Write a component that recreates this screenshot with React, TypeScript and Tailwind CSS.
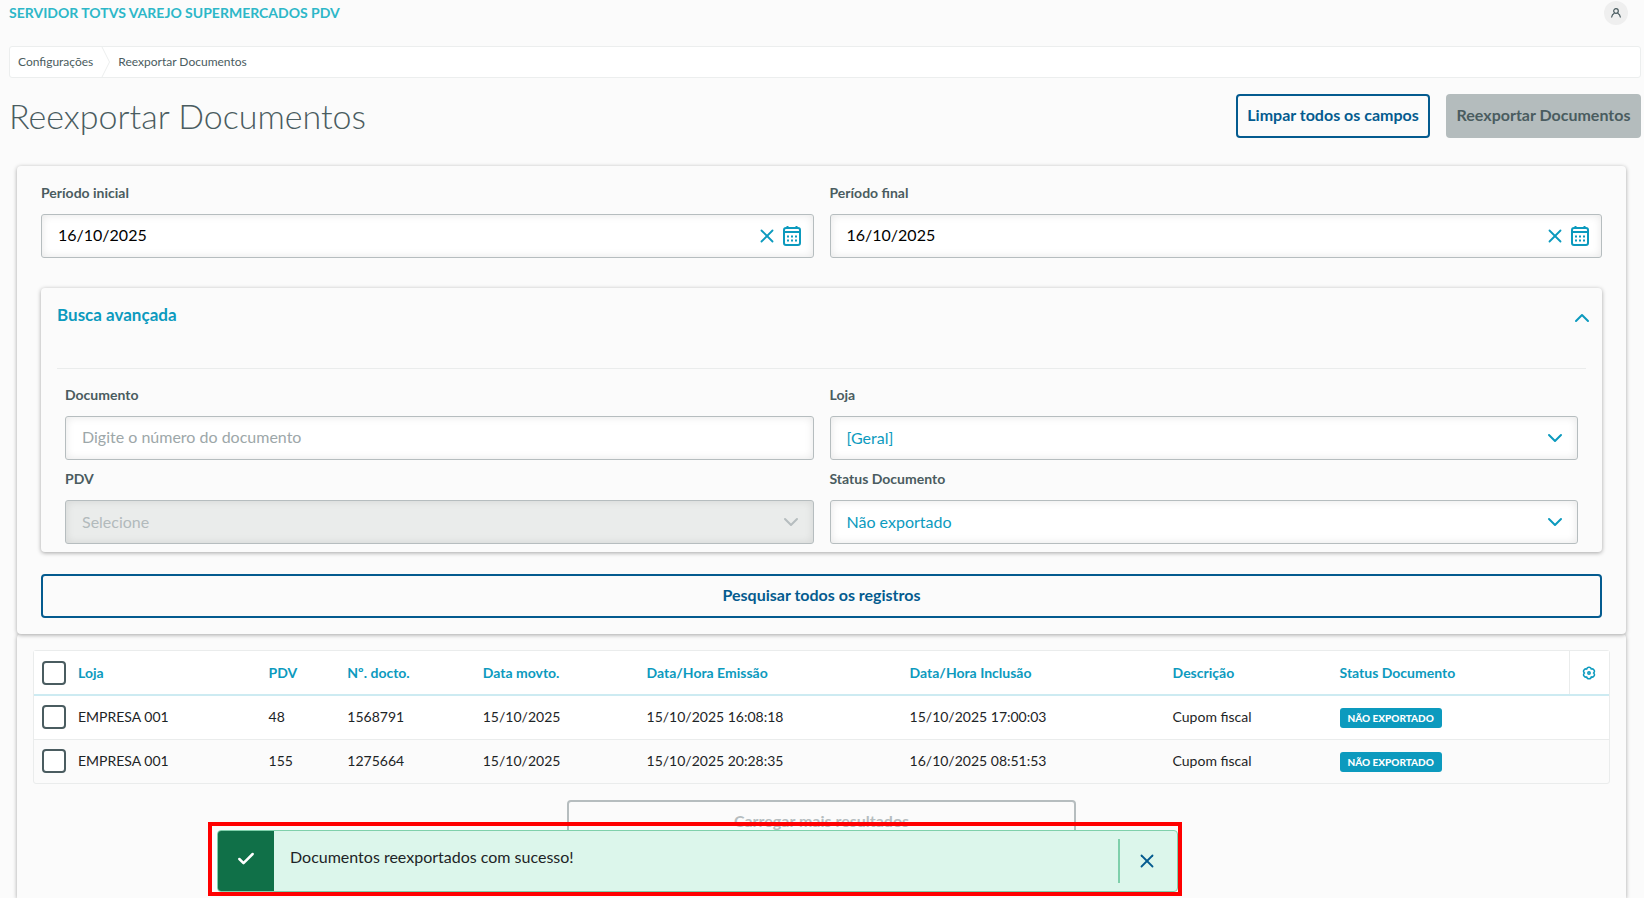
import { useState } from 'react'
import type { ReactNode } from 'react'
import { Check, ChevronDown, ChevronUp, X } from 'lucide-react'

interface DocumentRow {
  id: number
  loja: string
  pdv: string
  docto: string
  movto: string
  emissao: string
  inclusao: string
  descricao: string
  status: string
}

const rows: DocumentRow[] = [
  {
    id: 1,
    loja: 'EMPRESA 001',
    pdv: '48',
    docto: '1568791',
    movto: '15/10/2025',
    emissao: '15/10/2025 16:08:18',
    inclusao: '15/10/2025 17:00:03',
    descricao: 'Cupom fiscal',
    status: 'NÃO EXPORTADO',
  },
  {
    id: 2,
    loja: 'EMPRESA 001',
    pdv: '155',
    docto: '1275664',
    movto: '15/10/2025',
    emissao: '15/10/2025 20:28:35',
    inclusao: '16/10/2025 08:51:53',
    descricao: 'Cupom fiscal',
    status: 'NÃO EXPORTADO',
  },
]

const columns = [
  { label: 'Loja', width: 'w-[12.1%]' },
  { label: 'PDV', width: 'w-[5%]' },
  { label: 'Nº. docto.', width: 'w-[8.6%]' },
  { label: 'Data movto.', width: 'w-[10.4%]' },
  { label: 'Data/Hora Emissão', width: 'w-[16.7%]' },
  { label: 'Data/Hora Inclusão', width: 'w-[16.7%]' },
  { label: 'Descrição', width: 'w-[10.6%]' },
  { label: 'Status Documento', width: '' },
]

const cardClass = 'bg-[#fbfbfb] shadow-[0_1px_4px_rgba(0,0,0,0.35)]'
const fieldClass =
  'h-11 w-full appearance-none rounded-[3px] border border-[#b6bdbf] px-4 text-base shadow-[inset_0_0_8px_rgba(0,0,0,0.1)] outline-none'
const outlineButton =
  'h-11 rounded border-2 border-[#045b8f] pb-0.5 text-base font-bold text-[#045b8f]'

function CalendarIcon() {
  return (
    <svg width="20" height="22" viewBox="0 0 20 22" fill="none" stroke="currentColor" strokeWidth="2">
      <rect x="2" y="3" width="16" height="17" rx="2" />
      <path d="M2 7h16M5.500 1v2M14.500 1v2" />
      <path d="M5 11.500h10M5 15.500h10" strokeDasharray="2 2" />
    </svg>
  )
}

function GearIcon() {
  return (
    <svg width="14" height="14" viewBox="0 0 14 14" fill="none" stroke="currentColor" strokeWidth="1.500">
      <path
        d="M4.750 3.100A2.270 2.270 0 0 1 9.250 3.100A2.270 2.270 0 0 1 11.500 7A2.270 2.270 0 0 1 9.250 10.900A2.270 2.270 0 0 1 4.750 10.900A2.270 2.270 0 0 1 2.500 7A2.270 2.270 0 0 1 4.750 3.100z"
        strokeLinejoin="round"
      />
      <circle cx="7" cy="7" r="1.200" />
    </svg>
  )
}

function UserIcon() {
  return (
    <svg width="12" height="12" viewBox="0 0 12 12" fill="none" stroke="currentColor" strokeWidth="1.200">
      <circle cx="6" cy="4" r="2.300" />
      <path d="M1.500 10.500c.3-2.200 1.500-3.700 3-4.500M10.500 10.500c-.3-2.200-1.500-3.700-3-4.500" />
    </svg>
  )
}

function Field({ id, label, children }: { id: string; label: string; children: ReactNode }) {
  return (
    <div>
      <label htmlFor={id} className="block pt-[7px] pb-[9px] text-sm leading-5 font-bold text-[#4a5c60]">
        {label}
      </label>
      <div className="relative mt-0.5">{children}</div>
    </div>
  )
}

function DateField({ id, label }: { id: string; label: string }) {
  const [value, setValue] = useState('16/10/2025')

  return (
    <Field id={id} label={label}>
      <input
        id={id}
        type="text"
        value={value}
        onChange={e => setValue(e.target.value)}
        className={`${fieldClass} bg-white pb-1 text-black`}
      />
      <div className="absolute inset-y-0 right-3 flex items-center gap-1 text-[#0c9abe]">
        <button type="button" aria-label="Limpar" onClick={() => setValue('')}>
          <X size={22} />
        </button>
        <button type="button" aria-label="Abrir calendário">
          <CalendarIcon />
        </button>
      </div>
    </Field>
  )
}

function SelectField({ id, label, option, disabled }: { id: string; label: string; option: string; disabled?: boolean }) {
  return (
    <Field id={id} label={label}>
      <select
        id={id}
        disabled={disabled}
        className={`${fieldClass} bg-white text-[#0c9abe] disabled:bg-[#eaeceb] disabled:text-[#b2babc] disabled:opacity-100`}
      >
        <option>{option}</option>
      </select>
      <ChevronDown
        size={24}
        className={`pointer-events-none absolute top-2.5 right-[11px] ${disabled ? 'text-[#b6bdbf]' : 'text-[#0c9abe]'}`}
      />
    </Field>
  )
}

function CheckBox({ label }: { label: string }) {
  return (
    <input
      type="checkbox"
      aria-label={label}
      className="block size-6 appearance-none rounded border-2 border-[#4a5c60] bg-white checked:bg-[#0c9abe]"
    />
  )
}

export default function App() {
  const [toastOpen, setToastOpen] = useState(true)
  const [advancedOpen, setAdvancedOpen] = useState(true)

  return (
    <div className="flex min-h-screen flex-col bg-[#fbfbfb] font-[Lato,'Noto_Sans',sans-serif] text-[#1d2426]">
      <header className="flex h-[26px] items-center justify-between pr-4 pl-[9px]">
        <span className="text-sm font-bold text-[#2db7c8]">SERVIDOR TOTVS VAREJO SUPERMERCADOS PDV</span>
        <button
          type="button"
          aria-label="Usuário"
          className="flex size-6 items-center justify-center rounded-full bg-[#efefef] text-[#4a5c60]"
        >
          <UserIcon />
        </button>
      </header>

      <nav
        aria-label="Navegação"
        className="mt-5 mr-[3px] ml-[9px] flex h-8 items-center rounded-[3px] border border-[#eceeee] bg-white text-xs text-[#4a5c60]"
      >
        <a href="#configuracoes" className="pl-2">
          Configurações
        </a>
        <svg width="9" height="32" viewBox="0 0 9 32" fill="none" stroke="#eceeee" className="mx-2">
          <path d="M.5 0l8 16-8 16" />
        </svg>
        <a href="#reexportar">Reexportar Documentos</a>
      </nav>

      <div className="mt-4 mr-[3px] ml-[9px] flex items-center justify-between">
        <h1 className="text-[34px] leading-11 font-light text-[#4a5c60]">Reexportar Documentos</h1>
        <div className="flex gap-4">
          <button type="button" className={`${outlineButton} w-[194px]`}>
            Limpar todos os campos
          </button>
          <button
            type="button"
            disabled
            className="h-11 w-[195px] rounded bg-[#b4bcbd] pb-0.5 text-base font-bold text-[#4a5c60]"
          >
            Reexportar Documentos
          </button>
        </div>
      </div>

      <main className="mt-7 mr-[18px] ml-[17px] flex grow flex-col">
        <section className={`${cardClass} relative rounded px-6 pt-2.5 pb-4`}>
          <div className="grid grid-cols-2 gap-4">
            <DateField id="periodo-inicial" label="Período inicial" />
            <DateField id="periodo-final" label="Período final" />
          </div>

          <div className={`${cardClass} mt-[30px] rounded px-4 pb-2`}>
            <button
              type="button"
              aria-expanded={advancedOpen}
              onClick={() => setAdvancedOpen(!advancedOpen)}
              className="flex h-[81px] w-full items-start justify-between border-b border-[#eaecec] pt-[15px] text-[17px] leading-6 font-bold text-[#0c9abe]"
            >
              Busca avançada
              <ChevronUp size={24} className="-mr-2 mt-[3px]" />
            </button>
            {advancedOpen && (
              <div className="grid grid-cols-2 gap-x-4 gap-y-0.5 px-2 pt-[9px]">
                <Field id="documento" label="Documento">
                  <input
                    id="documento"
                    type="text"
                    placeholder="Digite o número do documento"
                    className={`${fieldClass} bg-white pb-1 text-black placeholder:text-[#9da7a9]`}
                  />
                </Field>
                <SelectField id="loja" label="Loja" option="[Geral]" />
                <SelectField id="pdv" label="PDV" option="Selecione" disabled />
                <SelectField id="status" label="Status Documento" option="Não exportado" />
              </div>
            )}
          </div>

          <button type="button" className={`${outlineButton} mt-[22px] w-full`}>
            Pesquisar todos os registros
          </button>
        </section>

        <section className={`${cardClass} grow rounded-t px-4 pt-4`}>
          <div className="rounded-[3px] border border-[#eaecec]">
            <table className="w-full table-fixed text-left text-sm">
              <thead className="bg-white text-[#0c9abe]">
                <tr className="h-11 border-b-2 border-[#cdebf2]">
                  <th className="w-11 pl-2">
                    <CheckBox label="Selecionar todos" />
                  </th>
                  {columns.map(column => (
                    <th key={column.label} className={`font-bold ${column.width}`}>
                      {column.label}
                    </th>
                  ))}
                  <th className="w-10 border-l border-[#eaecec]">
                    <button type="button" aria-label="Configurar colunas" className="mx-auto block">
                      <GearIcon />
                    </button>
                  </th>
                </tr>
              </thead>
              <tbody>
                {rows.map(row => (
                  <tr key={row.id} className="h-11 border-b border-[#eaecec] odd:bg-white last:border-b-0">
                    <td className="pl-2">
                      <CheckBox label={`Selecionar documento ${row.docto}`} />
                    </td>
                    <td>{row.loja}</td>
                    <td>{row.pdv}</td>
                    <td>{row.docto}</td>
                    <td>{row.movto}</td>
                    <td>{row.emissao}</td>
                    <td>{row.inclusao}</td>
                    <td>{row.descricao}</td>
                    <td colSpan={2}>
                      <span className="inline-block rounded-[3px] bg-[#0c9abe] px-2 align-middle text-[10px] leading-5 font-black text-white">
                        {row.status}
                      </span>
                    </td>
                  </tr>
                ))}
              </tbody>
            </table>
          </div>
          <div className="mt-4 grid grid-cols-3">
            <button
              type="button"
              disabled
              className="col-start-2 mx-2 h-11 rounded border-2 border-[#b6bdbf] pb-0.5 text-base font-bold text-[#b6bdbf]"
            >
              Carregar mais resultados
            </button>
          </div>
        </section>
      </main>

      {toastOpen && (
        <div className="fixed right-[462px] bottom-0.5 left-52 border-4 border-[#ff0000] pt-1 pl-[5px]">
          <div
            role="status"
            className="flex h-[62px] items-stretch overflow-hidden rounded border border-[#7fd0ab] bg-[#dcf6eb]"
          >
            <div className="flex w-14 items-center justify-center bg-[#107048] pb-1 text-white">
              <Check size={20} strokeWidth={3} />
            </div>
            <p className="grow self-center pb-2 pl-4 text-base">Documentos reexportados com sucesso!</p>
            <div className="my-2 mr-[3px] flex w-14 items-center justify-center border-l-2 border-[#7fd0ab]">
              <button type="button" aria-label="Fechar" onClick={() => setToastOpen(false)} className="text-[#045b8f]">
                <X size={22} />
              </button>
            </div>
          </div>
        </div>
      )}
    </div>
  )
}
